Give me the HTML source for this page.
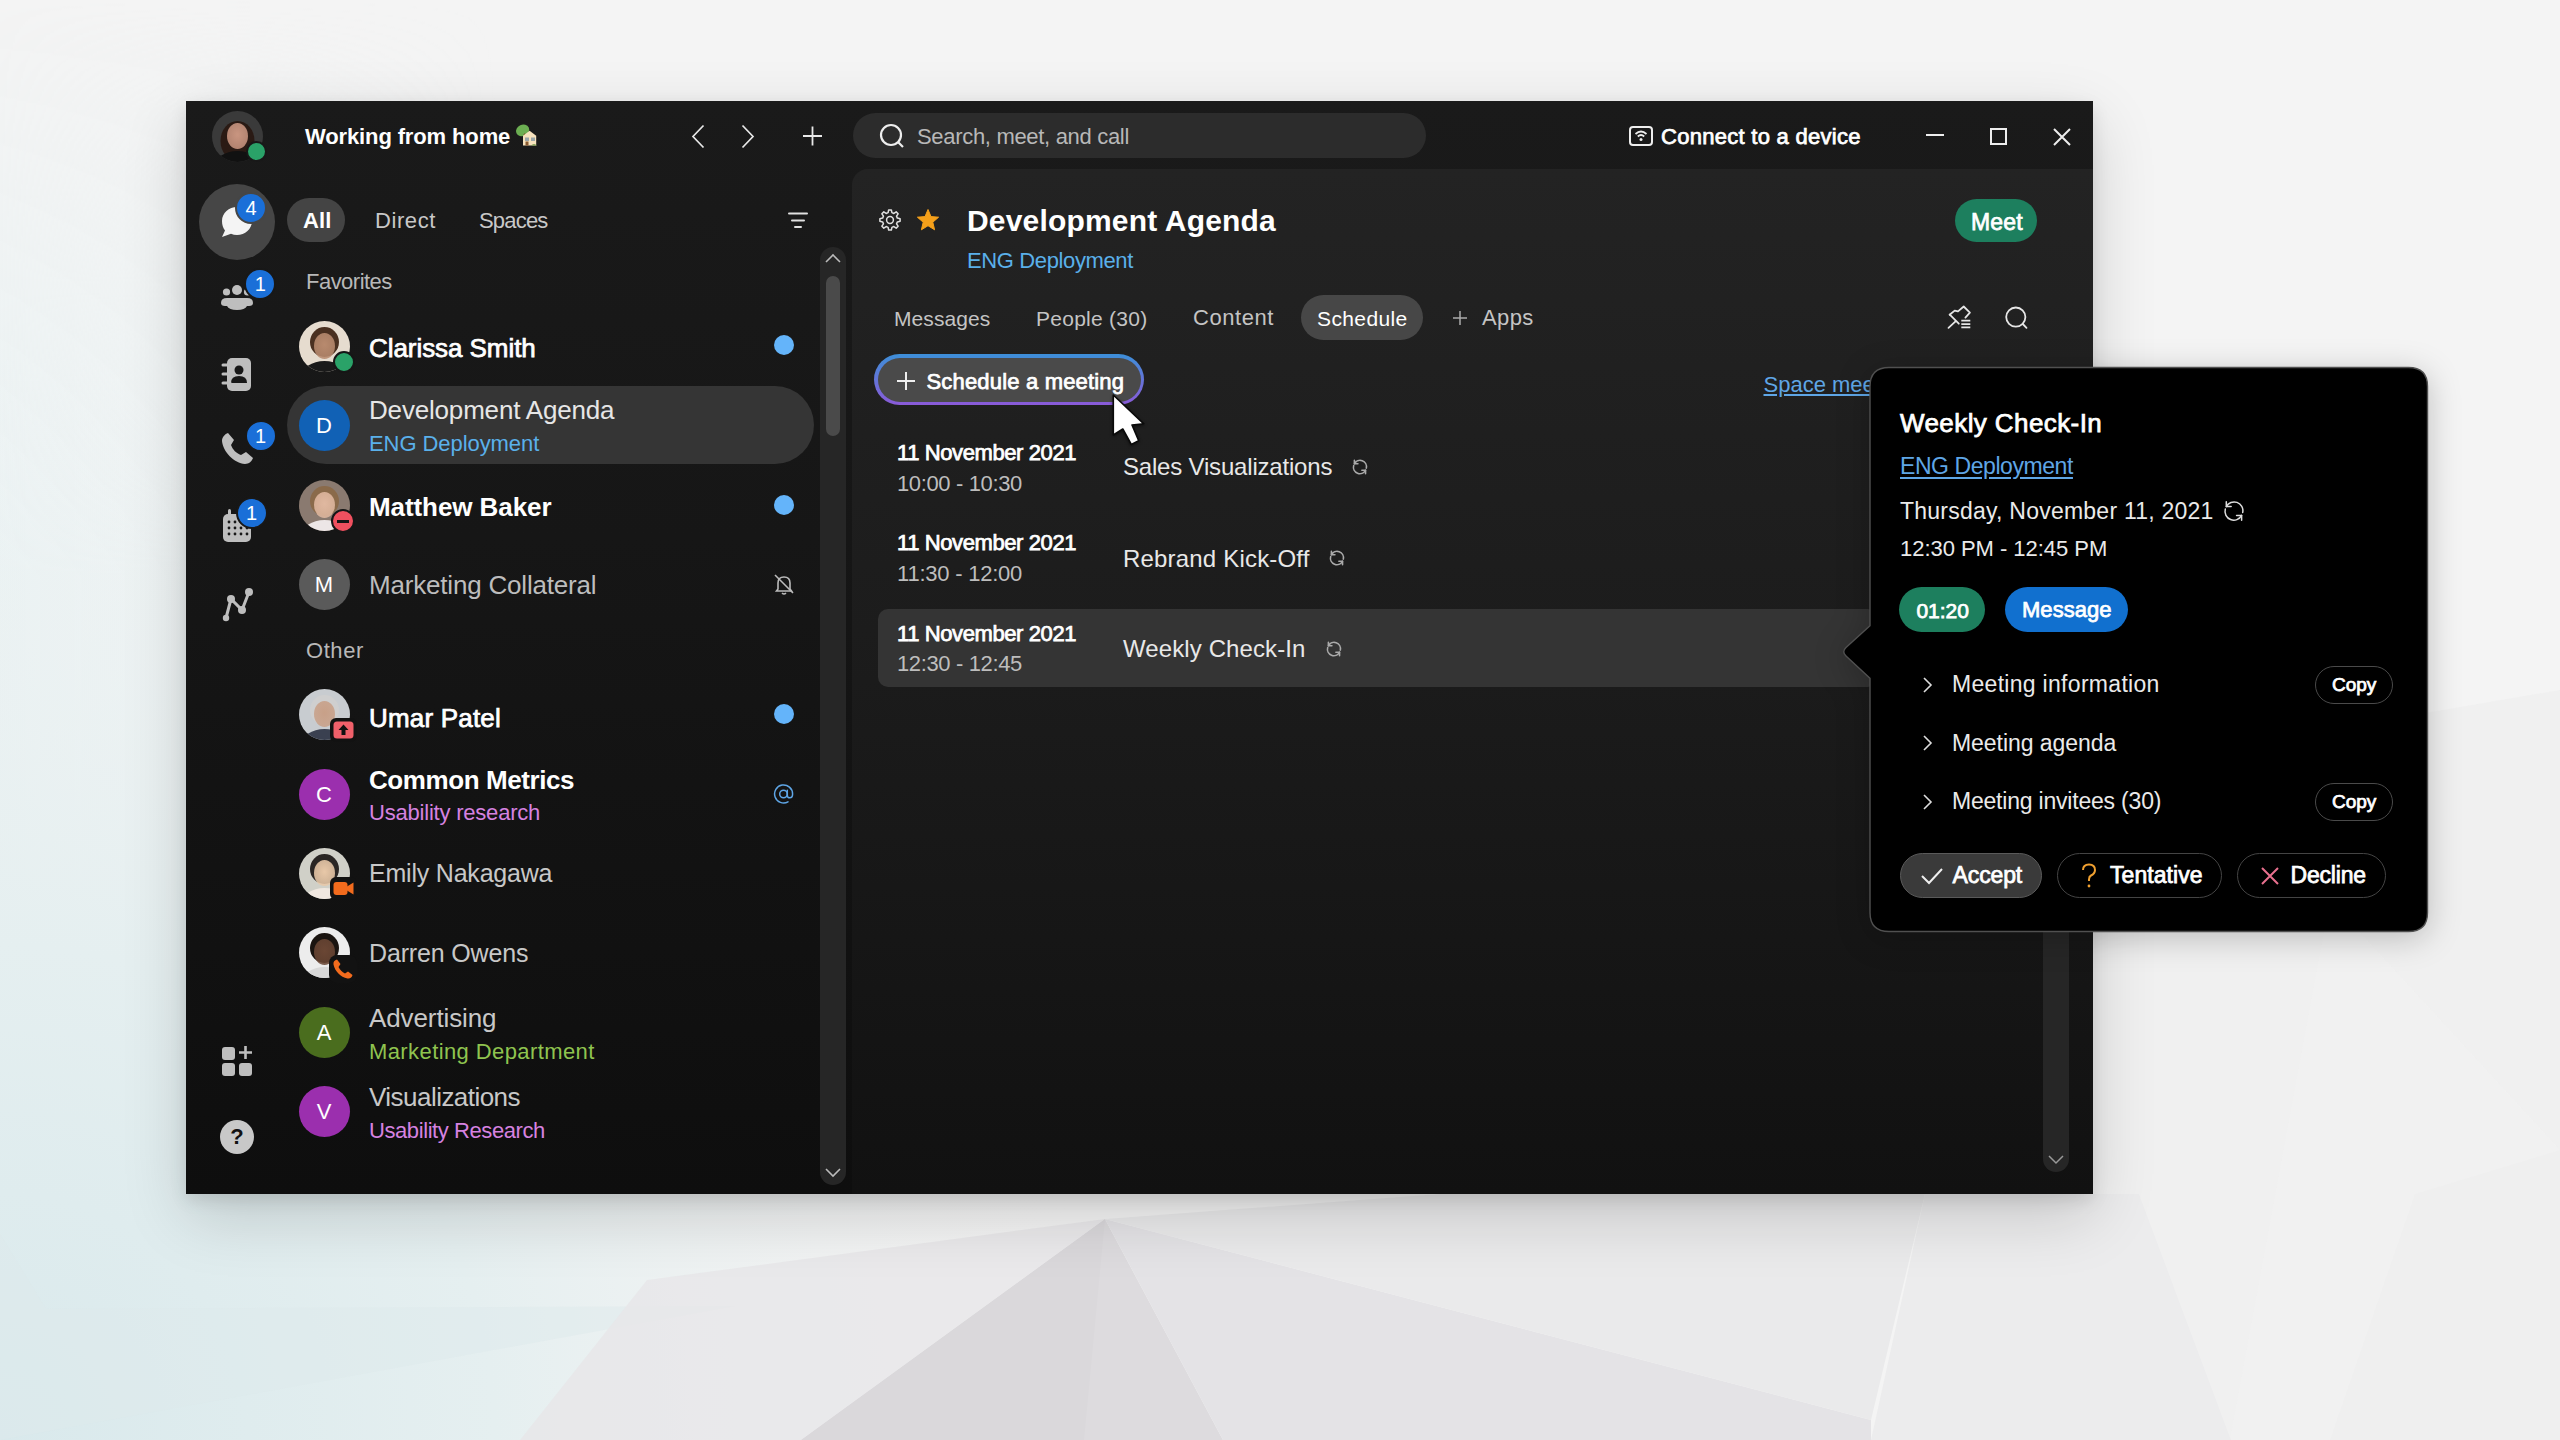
<!DOCTYPE html>
<html><head><meta charset="utf-8"><style>
html,body{margin:0;padding:0;width:2560px;height:1440px;overflow:hidden;font-family:"Liberation Sans", sans-serif;}
body{position:relative;background:#eceeef;}
</style></head><body>
<svg style="position:absolute;left:0;top:0" width="2560" height="1440" viewBox="0 0 2560 1440">
<defs>
<radialGradient id="cy" cx="0" cy="1440" r="1100" gradientUnits="userSpaceOnUse"><stop offset="0" stop-color="#d9e9ec"/><stop offset="0.45" stop-color="#e5eff0"/><stop offset="1" stop-color="#f3f3f3" stop-opacity="0"/></radialGradient>
<linearGradient id="lf" x1="0" y1="0" x2="1" y2="0"><stop offset="0" stop-color="#e9f2f3"/><stop offset="1" stop-color="#e9f2f3" stop-opacity="0"/></linearGradient>
<linearGradient id="lfm" x1="0" y1="0" x2="0" y2="1"><stop offset="0" stop-color="#fff" stop-opacity="0"/><stop offset="0.4" stop-color="#fff" stop-opacity="1"/><stop offset="1" stop-color="#fff" stop-opacity="1"/></linearGradient>
<mask id="lmask"><rect x="0" y="0" width="500" height="1440" fill="url(#lfm)"/></mask>
</defs>
<rect width="2560" height="1440" fill="#f4f4f4"/>
<rect x="0" y="0" width="500" height="1440" fill="url(#lf)" mask="url(#lmask)"/>
<rect width="2560" height="1440" fill="url(#cy)"/>
<polygon points="2093,770 2560,690 2560,1440 2093,1440" fill="#ebebec" opacity="0.45"/>
<polygon points="2230,1440 2330,900 2560,1150 2560,1440" fill="#f1f1f1" opacity="0.8"/>
<polygon points="0,1234 46,1309 735,1306 0,1440" fill="#dde9ec" opacity="0.5"/>
<polygon points="1105,1219 1223,1440 801,1440" fill="#dddbde"/>
<polygon points="1105,1219 1084,1440 801,1440" fill="#dad8db"/>
<polygon points="1105,1219 1871,1420 1871,1440 1223,1440" fill="#e4e3e6"/>
<polygon points="647,1280 1105,1219 801,1440 520,1440" fill="#e7e6e8" opacity="0.8"/>
<polygon points="1105,1219 1440,1194 1925,1194 1871,1420" fill="#eaeaeb"/>
<polygon points="1925,1194 2139,1194 2231,1440 1871,1440" fill="#ececed"/>
<polygon points="2415,1194 2560,1150 2560,1440 2330,1440" fill="#efefef"/>
</svg>
<div style="position:absolute;left:186px;top:101px;width:1907px;height:1093px;background:#000;box-shadow:0 22px 60px rgba(0,0,0,0.16),0 6px 16px rgba(0,0,0,0.10);"></div>
<div style="position:absolute;left:186px;top:101px;width:1907px;height:1093px;background:linear-gradient(#1a1a1a 0%,#161616 40%,#0e0e0e 100%);"></div>
<div style="position:absolute;left:852px;top:169px;width:1241px;height:1025px;background:linear-gradient(#232323 0%,#1c1c1c 45%,#111111 100%);border-top-left-radius:16px;"></div>
<svg style="position:absolute;left:212.0px;top:110.5px;filter:blur(0.5px);" width="51" height="51" viewBox="0 0 51 51"><defs><clipPath id="pc1"><circle cx="25.5" cy="25.5" r="25.5"/></clipPath><radialGradient id="pf1" cx="0.5" cy="0.45" r="0.55"><stop offset="0" stop-color="#c99580"/><stop offset="1" stop-color="#c99580" stop-opacity="0.85"/></radialGradient></defs><g clip-path="url(#pc1)"><g transform="scale(1.0000)"><rect width="51" height="51" fill="#3a3a3a"/><ellipse cx="25.5" cy="30" rx="17" ry="20" fill="#2a1a14"/><ellipse cx="25.5" cy="25" rx="10.5" ry="13" fill="url(#pf1)"/><ellipse cx="25.5" cy="55" rx="23" ry="15" fill="#111"/></g></g></svg>
<div style="position:absolute;left:246px;top:141px;width:21px;height:21px;border-radius:50%;background:#2aa268;border:2px solid #181818;box-sizing:border-box;"></div>
<div style="position:absolute;left:305px;top:126.38px;font-size:22px;line-height:22px;font-weight:700;color:#fff;white-space:nowrap;letter-spacing:-0.129px;">Working from home</div>
<svg style="position:absolute;left:512px;top:122px;filter:blur(0.4px);" width="30" height="26" viewBox="0 0 30 26"><ellipse cx="10.6" cy="8.3" rx="6.8" ry="5.6" transform="rotate(-25 10.6 8.3)" fill="#6cae52"/><path d="M12 12 L16 15" stroke="#7a5020" stroke-width="2"/><path d="M11 23.6 V13.8 L17.6 8.8 L24.2 13.8 V23.6 Z" fill="#f6e2bd"/><rect x="13" y="15.5" width="4" height="3.5" fill="#9aa6a8"/><rect x="19" y="15.5" width="4" height="3.5" fill="#9aa6a8"/><rect x="13.5" y="19.5" width="3" height="4" fill="#8a5a30"/><path d="M19 23.6 q3 -3 6 0z" fill="#7aa050"/></svg>
<svg style="position:absolute;left:688px;top:123px;" width="20" height="26" viewBox="0 0 20 26"><path d="M15.5 2.5 L5 13.5 L15.5 24.5" stroke="#e8e8e8" stroke-width="1.7" fill="none"/></svg>
<svg style="position:absolute;left:738px;top:123px;" width="20" height="26" viewBox="0 0 20 26"><path d="M4.5 2.5 L15 13.5 L4.5 24.5" stroke="#e8e8e8" stroke-width="1.7" fill="none"/></svg>
<svg style="position:absolute;left:800px;top:124px;" width="24" height="24" viewBox="0 0 24 24"><path d="M12.5 2.5 V21.5 M3 12 H22" stroke="#e8e8e8" stroke-width="1.8" fill="none"/></svg>
<div style="position:absolute;left:853px;top:113px;width:573px;height:45px;background:#2c2c2c;border-radius:23px;"></div>
<svg style="position:absolute;left:878px;top:122px;" width="28" height="28" viewBox="0 0 28 28"><circle cx="13" cy="13" r="10" stroke="#eee" stroke-width="2.2" fill="none"/><path d="M20 20 L25 25" stroke="#eee" stroke-width="2.2"/></svg>
<div style="position:absolute;left:917px;top:126.38px;font-size:22px;line-height:22px;font-weight:400;color:#b8b8b8;white-space:nowrap;letter-spacing:-0.314px;">Search, meet, and call</div>
<svg style="position:absolute;left:1628px;top:125px;" width="26" height="22" viewBox="0 0 26 22"><rect x="2" y="2" width="22" height="18" rx="3" stroke="#eee" stroke-width="2" fill="none"/><path d="M7.5 9 q5.5 -5 11 0 M9.8 11.5 q3.2 -3 6.4 0" stroke="#eee" stroke-width="1.8" fill="none"/><circle cx="13" cy="14.5" r="1.5" fill="#eee"/></svg>
<div style="position:absolute;left:1661px;top:126.38px;font-size:22px;line-height:22px;font-weight:400;color:#fff;white-space:nowrap;letter-spacing:0.281px;-webkit-text-stroke:0.75px #fff;">Connect to a device</div>
<div style="position:absolute;left:1926px;top:134px;width:18px;height:2px;background:#eee;"></div>
<div style="position:absolute;left:1990px;top:128px;width:17px;height:17px;border:2px solid #eee;box-sizing:border-box;"></div>
<svg style="position:absolute;left:2051px;top:126px;" width="22" height="22" viewBox="0 0 22 22"><path d="M3 3 L19 19 M19 3 L3 19" stroke="#eee" stroke-width="2"/></svg>
<div style="position:absolute;left:199px;top:184px;width:76px;height:76px;border-radius:50%;background:#464646;"></div>
<svg style="position:absolute;left:219px;top:204px;" width="36" height="36" viewBox="0 0 36 36"><path d="M18 3 C26 3 33 9 33 17 C33 25 26 31 18 31 C15.8 31 13.8 30.6 12 29.8 L3 33 L6 26.5 C4 24 3 21 3 17 C3 9 10 3 18 3z" fill="#f4f4f4"/></svg>
<div style="position:absolute;left:235.1px;top:191.8px;width:28px;height:28px;border-radius:50%;background:#1a6fd8;border:2.5px solid #464646;color:#fff;font-size:20px;line-height:28px;text-align:center;">4</div>
<svg style="position:absolute;left:219px;top:279px;" width="36" height="36" viewBox="0 0 36 36"><circle cx="18" cy="11" r="5" fill="#bebebe"/><circle cx="7.5" cy="13" r="3.6" fill="#bebebe"/><circle cx="28.5" cy="13" r="3.6" fill="#bebebe"/><path d="M2 24 q0 -5 6 -5 h20 q6 0 6 5 q0 3 -4 3 h-2 q-2 4 -10 4 q-8 0 -10 -4 h-2 q-4 0 -4 -3z" fill="#bebebe"/></svg>
<div style="position:absolute;left:244.2px;top:267.5px;width:28px;height:28px;border-radius:50%;background:#1a6fd8;border:2.5px solid #181818;color:#fff;font-size:20px;line-height:28px;text-align:center;">1</div>
<svg style="position:absolute;left:219px;top:356px;" width="36" height="38" viewBox="0 0 36 38"><rect x="8" y="2" width="24" height="33" rx="5" fill="#bebebe"/><circle cx="20" cy="14" r="4.5" fill="#181818"/><path d="M12 27 q0 -7 8 -7 q8 0 8 7z" fill="#181818"/><path d="M4 9 h7 M4 18 h7 M4 27 h7" stroke="#bebebe" stroke-width="3" stroke-linecap="round"/></svg>
<svg style="position:absolute;left:219px;top:430px;" width="38" height="38" viewBox="0 0 38 38"><path d="M9 3 C6 4 3 7 3 11 C4 22 15 33 26 34 C30 34 33 31 34 28 L27 22 L22 25 C17 23 14 20 12 15 L15 10z" fill="#bebebe"/></svg>
<div style="position:absolute;left:244.5px;top:419.5px;width:28px;height:28px;border-radius:50%;background:#1a6fd8;border:2.5px solid #181818;color:#fff;font-size:20px;line-height:28px;text-align:center;">1</div>
<svg style="position:absolute;left:219px;top:505px;" width="36" height="40" viewBox="0 0 36 40"><rect x="4" y="9" width="28" height="28" rx="5" fill="#bebebe"/><rect x="9" y="4" width="3" height="8" rx="1.5" fill="#bebebe"/><circle cx="10" cy="17" r="1.4" fill="#181818"/><circle cx="10" cy="23" r="1.4" fill="#181818"/><circle cx="10" cy="29" r="1.4" fill="#181818"/><circle cx="16" cy="17" r="1.4" fill="#181818"/><circle cx="16" cy="23" r="1.4" fill="#181818"/><circle cx="16" cy="29" r="1.4" fill="#181818"/><circle cx="22" cy="17" r="1.4" fill="#181818"/><circle cx="22" cy="23" r="1.4" fill="#181818"/><circle cx="22" cy="29" r="1.4" fill="#181818"/><circle cx="28" cy="17" r="1.4" fill="#181818"/><circle cx="28" cy="23" r="1.4" fill="#181818"/><circle cx="28" cy="29" r="1.4" fill="#181818"/></svg>
<div style="position:absolute;left:235.5px;top:496.5px;width:28px;height:28px;border-radius:50%;background:#1a6fd8;border:2.5px solid #181818;color:#fff;font-size:20px;line-height:28px;text-align:center;">1</div>
<svg style="position:absolute;left:219px;top:585px;" width="38" height="38" viewBox="0 0 38 38"><circle cx="7" cy="33" r="3.2" fill="#bebebe"/><circle cx="12" cy="14" r="4" fill="#bebebe"/><circle cx="23" cy="25" r="4" fill="#bebebe"/><circle cx="30" cy="7" r="4" fill="#bebebe"/><path d="M7 33 L12 14 L23 25 L30 7" stroke="#bebebe" stroke-width="3" fill="none"/></svg>
<svg style="position:absolute;left:219px;top:1043px;" width="38" height="36" viewBox="0 0 38 36"><rect x="3" y="4" width="13" height="13" rx="3" fill="#bebebe"/><rect x="3" y="20" width="13" height="13" rx="3" fill="#bebebe"/><rect x="20" y="20" width="13" height="13" rx="3" fill="#bebebe"/><path d="M26.5 3 V16 M20 9.5 H33" stroke="#bebebe" stroke-width="2.6"/></svg>
<div style="position:absolute;left:220px;top:1120px;width:34px;height:34px;border-radius:50%;background:#c8c8c8;color:#111;font-size:22px;font-weight:700;line-height:34px;text-align:center;">?</div>
<div style="position:absolute;left:287px;top:198px;width:58px;height:44px;background:#444;border-radius:22px;"></div>
<div style="position:absolute;left:303px;top:210.38px;font-size:22px;line-height:22px;font-weight:700;color:#fff;white-space:nowrap;letter-spacing:0.098px;">All</div>
<div style="position:absolute;left:375px;top:210.38px;font-size:22px;line-height:22px;font-weight:400;color:#c8c8c8;white-space:nowrap;letter-spacing:0.573px;">Direct</div>
<div style="position:absolute;left:479px;top:210.38px;font-size:22px;line-height:22px;font-weight:400;color:#c8c8c8;white-space:nowrap;letter-spacing:-0.814px;">Spaces</div>
<svg style="position:absolute;left:786px;top:208px;" width="24" height="24" viewBox="0 0 24 24"><path d="M3 5.5 H21 M6 12.5 H18 M9 19 H15" stroke="#e0e0e0" stroke-width="2" stroke-linecap="round"/></svg>
<div style="position:absolute;left:306px;top:271.38px;font-size:22px;line-height:22px;font-weight:400;color:#b8b8b8;white-space:nowrap;letter-spacing:-0.521px;">Favorites</div>
<div style="position:absolute;left:306px;top:640.38px;font-size:22px;line-height:22px;font-weight:400;color:#b8b8b8;white-space:nowrap;letter-spacing:0.572px;">Other</div>
<div style="position:absolute;left:820px;top:247px;width:26px;height:938px;background:#262626;border-radius:13px;"></div>
<div style="position:absolute;left:826px;top:276px;width:14px;height:160px;background:#4a4a4a;border-radius:7px;"></div>
<svg style="position:absolute;left:823px;top:251px;" width="20" height="14" viewBox="0 0 20 14"><path d="M3 11 L10 4 L17 11" stroke="#bbb" stroke-width="1.6" fill="none"/></svg>
<svg style="position:absolute;left:823px;top:1166px;" width="20" height="14" viewBox="0 0 20 14"><path d="M3 3 L10 10 L17 3" stroke="#bbb" stroke-width="1.6" fill="none"/></svg>
<div style="position:absolute;left:287px;top:386px;width:527px;height:78px;background:#353535;border-radius:39px;"></div>
<svg style="position:absolute;left:298.5px;top:320.5px;filter:blur(0.5px);" width="51" height="51" viewBox="0 0 51 51"><defs><clipPath id="pc2"><circle cx="25.5" cy="25.5" r="25.5"/></clipPath><radialGradient id="pf2" cx="0.5" cy="0.45" r="0.55"><stop offset="0" stop-color="#b88a6e"/><stop offset="1" stop-color="#b88a6e" stop-opacity="0.85"/></radialGradient></defs><g clip-path="url(#pc2)"><g transform="scale(1.0000)"><rect width="51" height="51" fill="#e6dccf"/><ellipse cx="25.5" cy="21" rx="14.5" ry="15" fill="#4a3020"/><ellipse cx="25.5" cy="25" rx="10.5" ry="13" fill="url(#pf2)"/><ellipse cx="25.5" cy="55" rx="23" ry="15" fill="#1a1a1a"/></g></g></svg>
<div style="position:absolute;left:333px;top:351px;width:22px;height:22px;background:#2aa268;border-radius:50%;border:2.5px solid #161616;box-sizing:border-box;"></div>
<div style="position:absolute;left:369px;top:334.99px;font-size:26px;line-height:26px;font-weight:400;color:#fff;white-space:nowrap;letter-spacing:-0.064px;-webkit-text-stroke:0.75px #fff;">Clarissa Smith</div>
<div style="position:absolute;left:774px;top:335px;width:20px;height:20px;background:#64b4fa;border-radius:50%;"></div>
<div style="position:absolute;left:298.5px;top:399.5px;width:51px;height:51px;border-radius:50%;background:#1161b5;color:#fff;font-size:22px;line-height:51px;text-align:center;">D</div>
<div style="position:absolute;left:369px;top:396.99px;font-size:26px;line-height:26px;font-weight:400;color:#e6e6e6;white-space:nowrap;letter-spacing:-0.180px;">Development Agenda</div>
<div style="position:absolute;left:369px;top:433.38px;font-size:22px;line-height:22px;font-weight:400;color:#5ab0ea;white-space:nowrap;letter-spacing:-0.067px;">ENG Deployment</div>
<svg style="position:absolute;left:298.5px;top:479.5px;filter:blur(0.5px);" width="51" height="51" viewBox="0 0 51 51"><defs><clipPath id="pc3"><circle cx="25.5" cy="25.5" r="25.5"/></clipPath><radialGradient id="pf3" cx="0.5" cy="0.45" r="0.55"><stop offset="0" stop-color="#e0b8a0"/><stop offset="1" stop-color="#e0b8a0" stop-opacity="0.85"/></radialGradient></defs><g clip-path="url(#pc3)"><g transform="scale(1.0000)"><rect width="51" height="51" fill="#8a7a70"/><ellipse cx="25.5" cy="21" rx="14.5" ry="15" fill="#8a6a4a"/><ellipse cx="25.5" cy="25" rx="10.5" ry="13" fill="url(#pf3)"/><ellipse cx="25.5" cy="55" rx="23" ry="15" fill="#ece6e6"/></g></g></svg>
<div style="position:absolute;left:331px;top:509px;width:24px;height:24px;background:#f0505f;border-radius:50%;border:2.5px solid #161616;box-sizing:border-box;"></div>
<div style="position:absolute;left:337px;top:519.5px;width:12px;height:3px;background:#161616;"></div>
<div style="position:absolute;left:369px;top:493.99px;font-size:26px;line-height:26px;font-weight:700;color:#fff;white-space:nowrap;letter-spacing:-0.078px;">Matthew Baker</div>
<div style="position:absolute;left:774px;top:495px;width:20px;height:20px;background:#64b4fa;border-radius:50%;"></div>
<div style="position:absolute;left:298.5px;top:558.5px;width:51px;height:51px;border-radius:50%;background:#5a5a5a;color:#fff;font-size:22px;line-height:51px;text-align:center;">M</div>
<div style="position:absolute;left:369px;top:571.99px;font-size:26px;line-height:26px;font-weight:400;color:#bdbdbd;white-space:nowrap;letter-spacing:-0.193px;">Marketing Collateral</div>
<svg style="position:absolute;left:772px;top:572px;" width="24" height="24" viewBox="0 0 24 24"><path d="M6 17 V11 q0 -6 6 -6 q6 0 6 6 V17 L19.5 19 H4.5z M10 21 q2 2 4 0" stroke="#bbb" stroke-width="1.6" fill="none"/><path d="M3 3 L21 21" stroke="#bbb" stroke-width="1.6"/></svg>
<svg style="position:absolute;left:298.5px;top:688.5px;filter:blur(0.5px);" width="51" height="51" viewBox="0 0 51 51"><defs><clipPath id="pc4"><circle cx="25.5" cy="25.5" r="25.5"/></clipPath><radialGradient id="pf4" cx="0.5" cy="0.45" r="0.55"><stop offset="0" stop-color="#c8a088"/><stop offset="1" stop-color="#c8a088" stop-opacity="0.85"/></radialGradient></defs><g clip-path="url(#pc4)"><g transform="scale(1.0000)"><rect width="51" height="51" fill="#c8ccd0"/><ellipse cx="25.5" cy="21" rx="14.5" ry="15" fill="#cfcfcf"/><ellipse cx="25.5" cy="25" rx="10.5" ry="13" fill="url(#pf4)"/><ellipse cx="25.5" cy="55" rx="23" ry="15" fill="#3a4050"/></g></g></svg>
<svg style="position:absolute;left:330px;top:718px;" width="27" height="24" viewBox="0 0 27 24"><rect x="0" y="0" width="27" height="24" rx="6" fill="#121212"/><rect x="3.5" y="3.5" width="20" height="17" rx="3.5" fill="#f0606a"/><path d="M13.5 6.5 L8.5 12 H11.5 V17 H15.5 V12 H18.5z" fill="#111"/></svg>
<div style="position:absolute;left:369px;top:704.99px;font-size:26px;line-height:26px;font-weight:400;color:#fff;white-space:nowrap;letter-spacing:0.190px;-webkit-text-stroke:0.75px #fff;">Umar Patel</div>
<div style="position:absolute;left:774px;top:704px;width:20px;height:20px;background:#64b4fa;border-radius:50%;"></div>
<div style="position:absolute;left:298.5px;top:768.5px;width:51px;height:51px;border-radius:50%;background:#9b2fae;color:#fff;font-size:22px;line-height:51px;text-align:center;">C</div>
<div style="position:absolute;left:369px;top:766.99px;font-size:26px;line-height:26px;font-weight:700;color:#fff;white-space:nowrap;letter-spacing:-0.412px;">Common Metrics</div>
<div style="position:absolute;left:369px;top:802.38px;font-size:22px;line-height:22px;font-weight:400;color:#d682e0;white-space:nowrap;letter-spacing:-0.207px;">Usability research</div>
<svg style="position:absolute;left:773px;top:783px;" width="22" height="22" viewBox="0 0 22 22"><g stroke="#5fa6e6" stroke-width="1.5" fill="none" stroke-linecap="round"><circle cx="10.5" cy="11" r="3.8"/><path d="M14.3 7.2 V12.2 Q14.3 14.8 16.8 14.8 Q19.6 14.8 19.6 11 A9 9 0 1 0 15 18.8"/></g></svg>
<svg style="position:absolute;left:298.5px;top:847.5px;filter:blur(0.5px);" width="51" height="51" viewBox="0 0 51 51"><defs><clipPath id="pc5"><circle cx="25.5" cy="25.5" r="25.5"/></clipPath><radialGradient id="pf5" cx="0.5" cy="0.45" r="0.55"><stop offset="0" stop-color="#e8c8a8"/><stop offset="1" stop-color="#e8c8a8" stop-opacity="0.85"/></radialGradient></defs><g clip-path="url(#pc5)"><g transform="scale(1.0000)"><rect width="51" height="51" fill="#d0d0c8"/><ellipse cx="25.5" cy="21" rx="14.5" ry="15" fill="#2a2624"/><ellipse cx="25.5" cy="25" rx="10.5" ry="13" fill="url(#pf5)"/><ellipse cx="25.5" cy="55" rx="23" ry="15" fill="#f0e8e0"/></g></g></svg>
<svg style="position:absolute;left:330px;top:877px;" width="27" height="23" viewBox="0 0 27 23"><rect x="0" y="0" width="27" height="23" rx="6" fill="#121212"/><rect x="3.5" y="5" width="14" height="13" rx="3" fill="#f26b1d"/><path d="M17 9.5 L23.5 5.5 V17.5 L17 13.5z" fill="#f26b1d"/></svg>
<div style="position:absolute;left:369px;top:860.84px;font-size:25px;line-height:25px;font-weight:400;color:#c8c8c8;white-space:nowrap;letter-spacing:-0.207px;">Emily Nakagawa</div>
<svg style="position:absolute;left:298.5px;top:926.5px;filter:blur(0.5px);" width="51" height="51" viewBox="0 0 51 51"><defs><clipPath id="pc6"><circle cx="25.5" cy="25.5" r="25.5"/></clipPath><radialGradient id="pf6" cx="0.5" cy="0.45" r="0.55"><stop offset="0" stop-color="#6a4634"/><stop offset="1" stop-color="#6a4634" stop-opacity="0.85"/></radialGradient></defs><g clip-path="url(#pc6)"><g transform="scale(1.0000)"><rect width="51" height="51" fill="#ececec"/><ellipse cx="25.5" cy="21" rx="14.5" ry="15" fill="#1a1410"/><ellipse cx="25.5" cy="25" rx="10.5" ry="13" fill="url(#pf6)"/><ellipse cx="25.5" cy="55" rx="23" ry="15" fill="#d8d8d8"/></g></g></svg>
<svg style="position:absolute;left:329px;top:955px;" width="28" height="28" viewBox="0 0 28 28"><rect x="0" y="0" width="28" height="28" rx="8" fill="#121212"/><path d="M8 4.5 C5.5 5 4 7 4.5 9.5 C6 16.5 11.5 22 18.5 23.5 C21 24 23 22.5 23.5 20 L19 16.5 L16 18.5 C13 17 11 15 9.5 12 L11.5 9z" fill="#f26b1d"/></svg>
<div style="position:absolute;left:369px;top:940.84px;font-size:25px;line-height:25px;font-weight:400;color:#c8c8c8;white-space:nowrap;letter-spacing:-0.152px;">Darren Owens</div>
<div style="position:absolute;left:298.5px;top:1006.5px;width:51px;height:51px;border-radius:50%;background:#4a6d1e;color:#fff;font-size:22px;line-height:51px;text-align:center;">A</div>
<div style="position:absolute;left:369px;top:1004.99px;font-size:26px;line-height:26px;font-weight:400;color:#c8c8c8;white-space:nowrap;letter-spacing:-0.106px;">Advertising</div>
<div style="position:absolute;left:369px;top:1041.38px;font-size:22px;line-height:22px;font-weight:400;color:#8fc44f;white-space:nowrap;letter-spacing:0.403px;">Marketing Department</div>
<div style="position:absolute;left:298.5px;top:1085.5px;width:51px;height:51px;border-radius:50%;background:#9b2fae;color:#fff;font-size:22px;line-height:51px;text-align:center;">V</div>
<div style="position:absolute;left:369px;top:1083.99px;font-size:26px;line-height:26px;font-weight:400;color:#c8c8c8;white-space:nowrap;letter-spacing:-0.535px;">Visualizations</div>
<div style="position:absolute;left:369px;top:1120.38px;font-size:22px;line-height:22px;font-weight:400;color:#d682e0;white-space:nowrap;letter-spacing:-0.417px;">Usability Research</div>
<svg style="position:absolute;left:879px;top:209px;" width="22" height="22" viewBox="0 0 22 22"><path d="M18.36 9.11 L21.11 9.64 L21.11 12.36 L18.36 12.89 L17.54 14.87 L19.11 17.19 L17.19 19.11 L14.87 17.54 L12.89 18.36 L12.36 21.11 L9.64 21.11 L9.11 18.36 L7.13 17.54 L4.81 19.11 L2.89 17.19 L4.46 14.87 L3.64 12.89 L0.89 12.36 L0.89 9.64 L3.64 9.11 L4.46 7.13 L2.89 4.81 L4.81 2.89 L7.13 4.46 L9.11 3.64 L9.64 0.89 L12.36 0.89 L12.89 3.64 L14.87 4.46 L17.19 2.89 L19.11 4.81 L17.54 7.13Z" fill="none" stroke="#e0e0e0" stroke-width="1.5" stroke-linejoin="round"/><circle cx="11" cy="11" r="3.4" fill="none" stroke="#e0e0e0" stroke-width="1.5"/></svg>
<svg style="position:absolute;left:916px;top:208px;" width="24" height="24" viewBox="0 0 24 24"><path d="M12 1.5 L15 8.6 L22.6 9.2 L16.8 14.2 L18.6 21.8 L12 17.7 L5.4 21.8 L7.2 14.2 L1.4 9.2 L9 8.6z" fill="#f5a01a" stroke="#f5a01a" stroke-width="1" stroke-linejoin="round"/></svg>
<div style="position:absolute;left:967px;top:206.20px;font-size:30px;line-height:30px;font-weight:700;color:#fff;white-space:nowrap;letter-spacing:0.187px;">Development Agenda</div>
<div style="position:absolute;left:967px;top:249.88px;font-size:22px;line-height:22px;font-weight:400;color:#5ab0ea;white-space:nowrap;letter-spacing:-0.374px;">ENG Deployment</div>
<div style="position:absolute;left:1955px;top:199px;width:82px;height:43px;background:#1d7f5e;border-radius:22px;"></div>
<div style="position:absolute;left:1971px;top:210.53px;font-size:23px;line-height:23px;font-weight:400;color:#fff;white-space:nowrap;letter-spacing:0.146px;-webkit-text-stroke:0.75px #fff;">Meet</div>
<div style="position:absolute;left:894px;top:308.22px;font-size:21px;line-height:21px;font-weight:400;color:#c4c4c4;white-space:nowrap;letter-spacing:0.077px;">Messages</div>
<div style="position:absolute;left:1036px;top:308.22px;font-size:21px;line-height:21px;font-weight:400;color:#c4c4c4;white-space:nowrap;letter-spacing:0.268px;">People (30)</div>
<div style="position:absolute;left:1193px;top:307.38px;font-size:22px;line-height:22px;font-weight:400;color:#c4c4c4;white-space:nowrap;letter-spacing:0.543px;">Content</div>
<div style="position:absolute;left:1301px;top:295px;width:122px;height:45px;background:#474747;border-radius:23px;"></div>
<div style="position:absolute;left:1317px;top:308.22px;font-size:21px;line-height:21px;font-weight:400;color:#fff;white-space:nowrap;letter-spacing:0.383px;">Schedule</div>
<svg style="position:absolute;left:1451px;top:309px;" width="18" height="18" viewBox="0 0 18 18"><path d="M9 2 V16 M2 9 H16" stroke="#aaa" stroke-width="1.5"/></svg>
<div style="position:absolute;left:1482px;top:307.38px;font-size:22px;line-height:22px;font-weight:400;color:#c4c4c4;white-space:nowrap;letter-spacing:0.388px;">Apps</div>
<svg style="position:absolute;left:1946px;top:304px;" width="28" height="28" viewBox="0 0 28 28"><g stroke="#e6e6e6" stroke-width="1.8" fill="none" stroke-linecap="round" stroke-linejoin="round"><path d="M3.6 10.7 L8.7 6.6 L12 7.4 L17.7 2.5 L23.9 8.6 L19.4 13.6"/><path d="M3.8 10.7 L12.8 19.7"/><path d="M9.5 17.3 L2.5 23.8"/></g><path d="M15.3 16.6 H24.3 M15.3 20.1 H24.3 M15.3 23.4 H24.3" stroke="#e6e6e6" stroke-width="1.7"/></svg>
<svg style="position:absolute;left:2003px;top:304px;" width="28" height="28" viewBox="0 0 28 28"><circle cx="12.8" cy="13.1" r="9.6" stroke="#e6e6e6" stroke-width="1.8" fill="none"/><path d="M19.8 20 L23.5 23.8" stroke="#e6e6e6" stroke-width="1.8" stroke-linecap="round"/></svg>
<div style="position:absolute;left:874px;top:354px;width:270px;height:51px;border-radius:26px;background:linear-gradient(#3d8fd8,#8a5ad8);"></div>
<div style="position:absolute;left:877.5px;top:357.5px;width:263px;height:44px;background:#4a4a4a;border-radius:22px;"></div>
<svg style="position:absolute;left:896px;top:371px;" width="20" height="20" viewBox="0 0 20 20"><path d="M10 1 V19 M1 10 H19" stroke="#eee" stroke-width="2"/></svg>
<div style="position:absolute;left:926.5px;top:370.68px;font-size:22px;line-height:22px;font-weight:400;color:#fff;white-space:nowrap;letter-spacing:0.179px;-webkit-text-stroke:0.75px #fff;">Schedule a meeting</div>
<div style="position:absolute;left:1763.5px;top:373.88px;font-size:22px;line-height:22px;font-weight:400;color:#5fa6e6;white-space:nowrap;letter-spacing:0.000px;text-decoration:underline;">Space meetings</div>
<div style="position:absolute;left:878px;top:609px;width:1000px;height:78px;background:#343434;border-radius:10px;"></div>
<div style="position:absolute;left:897px;top:442.18px;font-size:22px;line-height:22px;font-weight:400;color:#fff;white-space:nowrap;letter-spacing:-0.399px;-webkit-text-stroke:0.75px #fff;">11 November 2021</div>
<div style="position:absolute;left:897px;top:472.78px;font-size:22px;line-height:22px;font-weight:400;color:#bdbdbd;white-space:nowrap;letter-spacing:-0.363px;">10:00 - 10:30</div>
<div style="position:absolute;left:1123px;top:454.98px;font-size:24px;line-height:24px;font-weight:400;color:#e8e8e8;white-space:nowrap;letter-spacing:-0.188px;">Sales Visualizations</div>
<svg style="position:absolute;left:1352.0px;top:458.6px;" width="16" height="16" viewBox="0 0 16 16"><g transform="scale(0.6667)" stroke="#aaa" stroke-width="2.40" fill="none" stroke-linecap="round" stroke-linejoin="round"><path d="M3.6 7.2 A9.6 9.6 0 0 1 21.5 13.6"/><path d="M3.6 1.9 V7.2 H8.9"/><path d="M2.5 9.9 A9.6 9.6 0 0 0 20.3 16.8"/><path d="M14.8 16.8 H20.3 V22.1"/></g></svg>
<div style="position:absolute;left:897px;top:532.38px;font-size:22px;line-height:22px;font-weight:400;color:#fff;white-space:nowrap;letter-spacing:-0.399px;-webkit-text-stroke:0.75px #fff;">11 November 2021</div>
<div style="position:absolute;left:897px;top:563.08px;font-size:22px;line-height:22px;font-weight:400;color:#bdbdbd;white-space:nowrap;letter-spacing:-0.226px;">11:30 - 12:00</div>
<div style="position:absolute;left:1123px;top:546.88px;font-size:24px;line-height:24px;font-weight:400;color:#e8e8e8;white-space:nowrap;letter-spacing:0.187px;">Rebrand Kick-Off</div>
<svg style="position:absolute;left:1329.0px;top:549.8px;" width="16" height="16" viewBox="0 0 16 16"><g transform="scale(0.6667)" stroke="#aaa" stroke-width="2.40" fill="none" stroke-linecap="round" stroke-linejoin="round"><path d="M3.6 7.2 A9.6 9.6 0 0 1 21.5 13.6"/><path d="M3.6 1.9 V7.2 H8.9"/><path d="M2.5 9.9 A9.6 9.6 0 0 0 20.3 16.8"/><path d="M14.8 16.8 H20.3 V22.1"/></g></svg>
<div style="position:absolute;left:897px;top:622.88px;font-size:22px;line-height:22px;font-weight:400;color:#fff;white-space:nowrap;letter-spacing:-0.399px;-webkit-text-stroke:0.75px #fff;">11 November 2021</div>
<div style="position:absolute;left:897px;top:653.48px;font-size:22px;line-height:22px;font-weight:400;color:#bdbdbd;white-space:nowrap;letter-spacing:-0.363px;">12:30 - 12:45</div>
<div style="position:absolute;left:1123px;top:637.28px;font-size:24px;line-height:24px;font-weight:400;color:#e8e8e8;white-space:nowrap;letter-spacing:0.106px;">Weekly Check-In</div>
<svg style="position:absolute;left:1325.6px;top:640.8px;" width="16" height="16" viewBox="0 0 16 16"><g transform="scale(0.6667)" stroke="#aaa" stroke-width="2.40" fill="none" stroke-linecap="round" stroke-linejoin="round"><path d="M3.6 7.2 A9.6 9.6 0 0 1 21.5 13.6"/><path d="M3.6 1.9 V7.2 H8.9"/><path d="M2.5 9.9 A9.6 9.6 0 0 0 20.3 16.8"/><path d="M14.8 16.8 H20.3 V22.1"/></g></svg>
<div style="position:absolute;left:2043px;top:400px;width:26px;height:772px;background:#262626;border-radius:13px;"></div>
<svg style="position:absolute;left:2046px;top:1153px;" width="20" height="14" viewBox="0 0 20 14"><path d="M3 3 L10 10 L17 3" stroke="#999" stroke-width="1.5" fill="none"/></svg>
<svg style="position:absolute;left:1830px;top:355px;filter:drop-shadow(0 6px 16px rgba(0,0,0,0.22));" width="610" height="590" viewBox="0 0 610 590">
<path d="M40 31.5 Q40 12.5 59 12.5 L578.5 12.5 Q597.5 12.5 597.5 31.5 L597.5 557.5 Q597.5 576.5 578.5 576.5 L59 576.5 Q40 576.5 40 557.5 L40 323.3 L16 301 Q11.5 296.7 16 292.4 L40 270.8 Z" fill="#000" stroke="#505050" stroke-width="1.4"/>
</svg>
<div style="position:absolute;left:1900px;top:409.99px;font-size:26px;line-height:26px;font-weight:400;color:#fff;white-space:nowrap;letter-spacing:0.409px;-webkit-text-stroke:0.75px #fff;">Weekly Check-In</div>
<div style="position:absolute;left:1900px;top:454.93px;font-size:23px;line-height:23px;font-weight:400;color:#5fa6e6;white-space:nowrap;letter-spacing:-0.430px;text-decoration:underline;text-underline-offset:3px;">ENG Deployment</div>
<div style="position:absolute;left:1900px;top:500.03px;font-size:23px;line-height:23px;font-weight:400;color:#eaeaea;white-space:nowrap;letter-spacing:0.235px;">Thursday, November 11, 2021</div>
<svg style="position:absolute;left:2222.5px;top:500.3px;" width="22" height="22" viewBox="0 0 22 22"><g transform="scale(0.9167)" stroke="#ddd" stroke-width="1.64" fill="none" stroke-linecap="round" stroke-linejoin="round"><path d="M3.6 7.2 A9.6 9.6 0 0 1 21.5 13.6"/><path d="M3.6 1.9 V7.2 H8.9"/><path d="M2.5 9.9 A9.6 9.6 0 0 0 20.3 16.8"/><path d="M14.8 16.8 H20.3 V22.1"/></g></svg>
<div style="position:absolute;left:1900px;top:538.38px;font-size:22px;line-height:22px;font-weight:400;color:#eaeaea;white-space:nowrap;letter-spacing:-0.032px;">12:30 PM - 12:45 PM</div>
<div style="position:absolute;left:1899px;top:587px;width:86px;height:45px;background:#1d7f5e;border-radius:23px;"></div>
<div style="position:absolute;left:1916.4px;top:599.62px;font-size:21px;line-height:21px;font-weight:400;color:#fff;white-space:nowrap;letter-spacing:-0.026px;-webkit-text-stroke:0.75px #fff;">01:20</div>
<div style="position:absolute;left:2005px;top:587px;width:123px;height:45px;background:#1170cf;border-radius:23px;"></div>
<div style="position:absolute;left:2022px;top:598.78px;font-size:22px;line-height:22px;font-weight:400;color:#fff;white-space:nowrap;letter-spacing:0.040px;-webkit-text-stroke:0.75px #fff;">Message</div>
<svg style="position:absolute;left:1922px;top:675.5px;" width="12" height="18" viewBox="0 0 12 18"><path d="M2 2 L9 9 L2 16" stroke="#ddd" stroke-width="1.6" fill="none"/></svg>
<div style="position:absolute;left:1952px;top:672.53px;font-size:23px;line-height:23px;font-weight:400;color:#eaeaea;white-space:nowrap;letter-spacing:0.299px;">Meeting information</div>
<svg style="position:absolute;left:1922px;top:734px;" width="12" height="18" viewBox="0 0 12 18"><path d="M2 2 L9 9 L2 16" stroke="#ddd" stroke-width="1.6" fill="none"/></svg>
<div style="position:absolute;left:1952px;top:731.93px;font-size:23px;line-height:23px;font-weight:400;color:#eaeaea;white-space:nowrap;letter-spacing:-0.045px;">Meeting agenda</div>
<svg style="position:absolute;left:1922px;top:792.5px;" width="12" height="18" viewBox="0 0 12 18"><path d="M2 2 L9 9 L2 16" stroke="#ddd" stroke-width="1.6" fill="none"/></svg>
<div style="position:absolute;left:1952px;top:790.03px;font-size:23px;line-height:23px;font-weight:400;color:#eaeaea;white-space:nowrap;letter-spacing:-0.206px;">Meeting invitees (30)</div>
<div style="position:absolute;left:2315px;top:665.5px;width:78px;height:38px;border:1.5px solid #4a4a4a;border-radius:19px;box-sizing:border-box;"></div>
<div style="position:absolute;left:2332px;top:675.42px;font-size:19px;line-height:19px;font-weight:400;color:#fff;white-space:nowrap;letter-spacing:-0.006px;-webkit-text-stroke:0.75px #fff;">Copy</div>
<div style="position:absolute;left:2315px;top:782.5px;width:78px;height:38px;border:1.5px solid #4a4a4a;border-radius:19px;box-sizing:border-box;"></div>
<div style="position:absolute;left:2332px;top:792.42px;font-size:19px;line-height:19px;font-weight:400;color:#fff;white-space:nowrap;letter-spacing:-0.006px;-webkit-text-stroke:0.75px #fff;">Copy</div>
<div style="position:absolute;left:1900px;top:853px;width:142px;height:45px;background:#3a3a3a;border:1.5px solid #5a5a5a;border-radius:23px;box-sizing:border-box;"></div>
<svg style="position:absolute;left:1919px;top:864px;" width="26" height="24" viewBox="0 0 26 24"><path d="M3 12 L10 19 L23 5" stroke="#eee" stroke-width="2" fill="none"/></svg>
<div style="position:absolute;left:1952.6px;top:863.93px;font-size:23px;line-height:23px;font-weight:400;color:#fff;white-space:nowrap;letter-spacing:-0.150px;-webkit-text-stroke:0.75px #fff;">Accept</div>
<div style="position:absolute;left:2057px;top:853px;width:165px;height:45px;border:1.5px solid #444;border-radius:23px;box-sizing:border-box;"></div>
<svg style="position:absolute;left:2078px;top:862px;" width="22" height="28" viewBox="0 0 22 28"><path d="M5 8 Q5 2.5 11 2.5 Q17 2.5 17 8 Q17 11.5 13 13.5 Q11 14.5 11 17.5 V19" stroke="#f0a030" stroke-width="2" fill="none"/><circle cx="11" cy="24" r="1.4" fill="#f0a030"/></svg>
<div style="position:absolute;left:2110px;top:863.93px;font-size:23px;line-height:23px;font-weight:400;color:#fff;white-space:nowrap;letter-spacing:0.065px;-webkit-text-stroke:0.75px #fff;">Tentative</div>
<div style="position:absolute;left:2237px;top:853px;width:149px;height:45px;border:1.5px solid #444;border-radius:23px;box-sizing:border-box;"></div>
<svg style="position:absolute;left:2259px;top:865px;" width="22" height="22" viewBox="0 0 22 22"><path d="M3 3 L19 19 M19 3 L3 19" stroke="#e8708e" stroke-width="2"/></svg>
<div style="position:absolute;left:2290.5px;top:863.93px;font-size:23px;line-height:23px;font-weight:400;color:#fff;white-space:nowrap;letter-spacing:-0.190px;-webkit-text-stroke:0.75px #fff;">Decline</div>
<svg style="position:absolute;left:1105px;top:388px;filter:drop-shadow(0 1px 1.5px rgba(0,0,0,0.5));" width="45" height="62" viewBox="0 0 45 62"><path d="M8.3 7 L8.3 47 L17.8 41 L26.3 56.5 L33.7 52.6 L27 37 L38.8 35.8 Z" fill="#fff" stroke="#0a0a0a" stroke-width="1.6" stroke-linejoin="round"/></svg>
</body></html>
